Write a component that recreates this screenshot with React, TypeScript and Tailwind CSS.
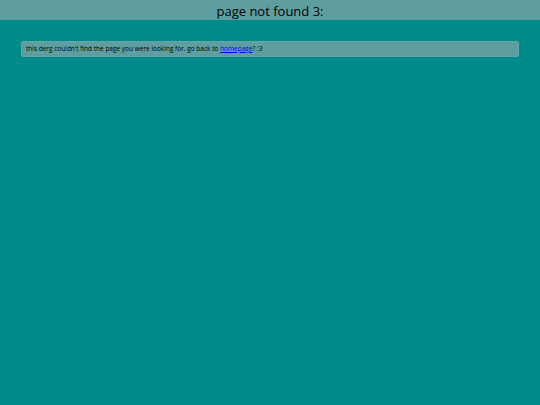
import React from 'react';

export default function App() {
  return (
    <div className="min-h-[405px] w-full bg-[#008b8b] font-['Open_Sans',sans-serif]">
      {/* Header */}
      <header className="h-5 bg-[#5f9ea0] flex items-center justify-center">
        <h1 className="text-[13px] leading-none text-black pt-[3px]">page not found 3:</h1>
      </header>

      {/* Message */}
      <main className="px-[21px] pt-[21px]">
        <div className="h-4 flex items-center px-1 bg-[#5f9ea0] border border-[#6aa5a6] rounded-[2px]">
          <p className="text-[6.5px] leading-none text-black">
            this derg couldn't find the page you were looking for. go back to{' '}
            <a href="#" className="text-[#0000ee] underline">homepage</a>? :3
          </p>
        </div>
      </main>
    </div>
  );
}
